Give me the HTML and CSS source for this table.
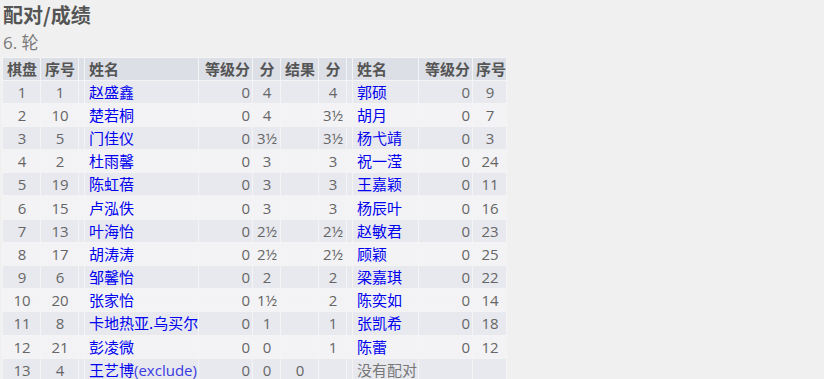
FILE: index.html
```html
<!DOCTYPE html>
<html lang="zh">
<head>
<meta charset="utf-8">
<title>配对/成绩</title>
<link rel="stylesheet" href="styles.css">
</head>
<body>
<h1 class="title">配对/成绩</h1>
<h2 class="round">6. 轮</h2>
<table class="pairings">
<colgroup>
<col class="w-board"><col class="w-no"><col class="w-sep"><col class="w-name"><col class="w-rating"><col class="w-pts"><col class="w-res"><col class="w-pts2"><col class="w-sep"><col class="w-name2"><col class="w-rating"><col class="w-no2">
</colgroup>
<thead>
<tr><th class="c">棋盘</th><th class="c">序号</th><th></th><th class="l">姓名</th><th class="r">等级分</th><th class="c">分</th><th class="c">结果</th><th class="c">分</th><th></th><th class="l">姓名</th><th class="r">等级分</th><th class="c">序号</th></tr>
</thead>
<tbody>
<tr><td class="c">1</td><td class="c">1</td><td></td><td class="l"><a>赵盛鑫</a></td><td class="r">0</td><td class="c">4</td><td class="c"></td><td class="c">4</td><td></td><td class="l"><a>郭硕</a></td><td class="r">0</td><td class="c">9</td></tr>
<tr><td class="c">2</td><td class="c">10</td><td></td><td class="l"><a>楚若桐</a></td><td class="r">0</td><td class="c">4</td><td class="c"></td><td class="c">3½</td><td></td><td class="l"><a>胡月</a></td><td class="r">0</td><td class="c">7</td></tr>
<tr><td class="c">3</td><td class="c">5</td><td></td><td class="l"><a>门佳仪</a></td><td class="r">0</td><td class="c">3½</td><td class="c"></td><td class="c">3½</td><td></td><td class="l"><a>杨弋靖</a></td><td class="r">0</td><td class="c">3</td></tr>
<tr><td class="c">4</td><td class="c">2</td><td></td><td class="l"><a>杜雨馨</a></td><td class="r">0</td><td class="c">3</td><td class="c"></td><td class="c">3</td><td></td><td class="l"><a>祝一滢</a></td><td class="r">0</td><td class="c">24</td></tr>
<tr><td class="c">5</td><td class="c">19</td><td></td><td class="l"><a>陈虹蓓</a></td><td class="r">0</td><td class="c">3</td><td class="c"></td><td class="c">3</td><td></td><td class="l"><a>王嘉颖</a></td><td class="r">0</td><td class="c">11</td></tr>
<tr><td class="c">6</td><td class="c">15</td><td></td><td class="l"><a>卢泓佚</a></td><td class="r">0</td><td class="c">3</td><td class="c"></td><td class="c">3</td><td></td><td class="l"><a>杨辰叶</a></td><td class="r">0</td><td class="c">16</td></tr>
<tr><td class="c">7</td><td class="c">13</td><td></td><td class="l"><a>叶海怡</a></td><td class="r">0</td><td class="c">2½</td><td class="c"></td><td class="c">2½</td><td></td><td class="l"><a>赵敏君</a></td><td class="r">0</td><td class="c">23</td></tr>
<tr><td class="c">8</td><td class="c">17</td><td></td><td class="l"><a>胡涛涛</a></td><td class="r">0</td><td class="c">2½</td><td class="c"></td><td class="c">2½</td><td></td><td class="l"><a>顾颖</a></td><td class="r">0</td><td class="c">25</td></tr>
<tr><td class="c">9</td><td class="c">6</td><td></td><td class="l"><a>邹馨怡</a></td><td class="r">0</td><td class="c">2</td><td class="c"></td><td class="c">2</td><td></td><td class="l"><a>梁嘉琪</a></td><td class="r">0</td><td class="c">22</td></tr>
<tr><td class="c">10</td><td class="c">20</td><td></td><td class="l"><a>张家怡</a></td><td class="r">0</td><td class="c">1½</td><td class="c"></td><td class="c">2</td><td></td><td class="l"><a>陈奕如</a></td><td class="r">0</td><td class="c">14</td></tr>
<tr><td class="c">11</td><td class="c">8</td><td></td><td class="l"><a>卡地热亚.乌买尔</a></td><td class="r">0</td><td class="c">1</td><td class="c"></td><td class="c">1</td><td></td><td class="l"><a>张凯希</a></td><td class="r">0</td><td class="c">18</td></tr>
<tr><td class="c">12</td><td class="c">21</td><td></td><td class="l"><a>彭凌微</a></td><td class="r">0</td><td class="c">0</td><td class="c"></td><td class="c">1</td><td></td><td class="l"><a>陈蕾</a></td><td class="r">0</td><td class="c">12</td></tr>
<tr><td class="c">13</td><td class="c">4</td><td></td><td class="l"><a>王艺博</a><a class="ex">(exclude)</a></td><td class="r">0</td><td class="c">0</td><td class="c">0</td><td class="c"></td><td></td><td class="l none">没有配对</td><td class="r"></td><td class="c"></td></tr>
</tbody>
</table>
</body>
</html>
```
FILE: styles.css
```css
html, body {
  margin: 0;
  padding: 0;
  background: #f0f0f0;
}
body {
  padding: 2px 0 0 3px;
  font-family: "Open Sans", "Noto Sans CJK SC", sans-serif;
  color: #666;
}
.title {
  margin: 0;
  font-size: 20px;
  line-height: 26px;
  font-weight: bold;
  color: #555;
  font-family: "Noto Sans CJK SC", sans-serif;
}
.round {
  margin: 2px 0 0 0;
  font-size: 17px;
  line-height: 26px;
  font-weight: normal;
  color: #7a7a7a;
}
.pairings {
  margin: 1px 0 0 -1px;
  border-collapse: separate;
  border-spacing: 1px;
  table-layout: fixed;
  width: 505px;
  font-size: 15px;
  background: #f4f4f5;
}
.w-board { width: 37px; }
.w-no { width: 37px; }
.w-sep { width: 5px; }
.w-name { width: 113px; }
.w-rating { width: 53px; }
.w-pts { width: 27px; }
.w-res { width: 37px; }
.w-pts2 { width: 27px; }
.w-name2 { width: 65px; }
.w-no2 { width: 33px; }
.pairings th, .pairings td {
  padding: 0 2px 0 3px;
  white-space: nowrap;
  overflow: visible;
}
.pairings th {
  height: 21.5px;
  line-height: 20px;
  background: #dcdfe6;
  color: #555;
  font-weight: bold;
  font-family: "Noto Sans CJK SC", sans-serif;
}
.pairings td {
  height: 22.2px;
  line-height: 20px;
}
.pairings tbody tr:nth-child(odd) td { background: #e8e9ef; }
.pairings tbody tr:nth-child(even) td { background: #f3f3f5; }
.c { text-align: center; }
.l { text-align: left; }
.r { text-align: right; }
.pairings th.l, .pairings td.l { padding-left: 4px; }
.pairings a {
  color: #0000ee;
  text-decoration: none;
  font-family: "Noto Sans CJK SC", sans-serif;
}
.pairings a.ex {
  font-family: "Open Sans", sans-serif;
  color: #3a3ae0;
}
.none { color: #777; font-family: "Noto Sans CJK SC", sans-serif; }
```
